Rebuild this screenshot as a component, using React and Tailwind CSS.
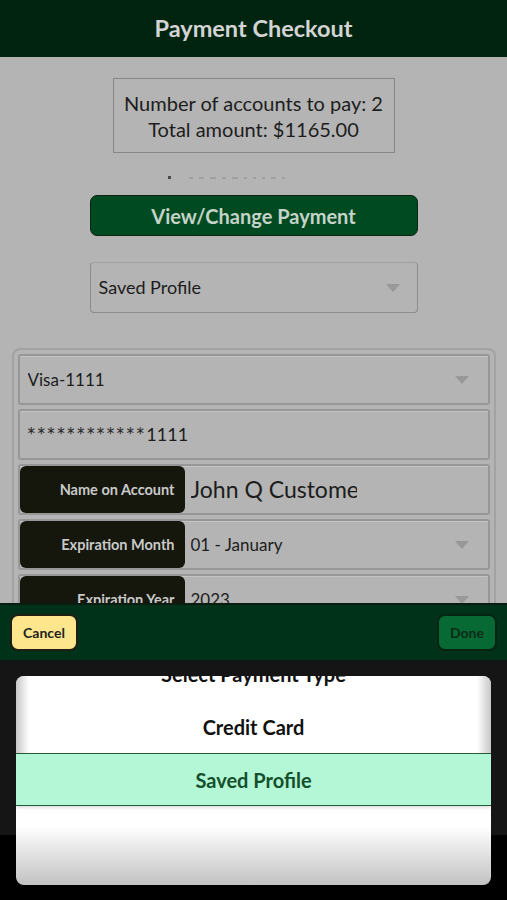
import React from "react";

function Caret() {
  return (
    <svg width="16" height="10" viewBox="0 0 16 10" className="shrink-0">
      <path d="M1 1 L15 1 L8 9 Z" fill="#989898" />
    </svg>
  );
}

function Row({ label, children, caret, valueClass = "text-[17px]" }) {
  return (
    <div className="h-[51px] shrink-0 flex items-stretch rounded-[3px] border-2 border-[#979797] shadow-[inset_0_1px_0_#c4c4c4] overflow-hidden">
      {label && (
        <div className="w-[165px] shrink-0 bg-[#15170d] rounded-[6px] flex items-center justify-end pr-[10px] text-[14.5px] font-bold text-[#c9c9c9]">
          {label}
        </div>
      )}
      <div className={`flex-1 flex items-center ${label ? "pl-[6px]" : "pl-[8px]"} pr-[18px] text-[#1c1c1c] ${valueClass}`}>
        <div className="flex-1 overflow-hidden whitespace-nowrap">{children}</div>
        {caret && <Caret />}
      </div>
    </div>
  );
}

export default function App() {
  return (
    <div
      className="w-[507px] h-[900px] flex flex-col overflow-hidden bg-black"
      style={{ fontFamily: "Lato, 'Noto Sans', sans-serif" }}
    >
      {/* Header */}
      <div className="h-[57px] shrink-0 bg-[#00240f] flex items-center justify-center">
        <h1 className="text-[23.5px] font-bold text-[#d4d4d4]">Payment Checkout</h1>
      </div>

      {/* Dimmed page content */}
      <div className="h-[546px] shrink-0 bg-[#b4b4b4] overflow-hidden flex flex-col items-center pt-[21px]">
        <div className="w-[282px] h-[75px] shrink-0 border border-[#878787] flex flex-col items-center justify-center text-[20px] leading-[26px] text-[#1d1d1d]">
          <span>Number of accounts to pay: 2</span>
          <span>Total amount: $1165.00</span>
        </div>

        {/* clipped line of text behind the summary */}
        <div className="mt-[23px] h-[3px] w-[200px] shrink-0 flex items-end gap-[6px] pl-[14px]">
          <div className="w-[3px] h-[3px] bg-[#4a4a4a]" />
          <div className="ml-[12px] w-[4px] h-[2px] bg-[#a0a0a0]" />
          <div className="w-[5px] h-[2px] bg-[#a0a0a0]" />
          <div className="w-[6px] h-[2px] bg-[#a0a0a0]" />
          <div className="w-[4px] h-[2px] bg-[#a0a0a0]" />
          <div className="w-[6px] h-[2px] bg-[#a0a0a0]" />
          <div className="w-[3px] h-[2px] bg-[#a0a0a0]" />
          <div className="w-[3px] h-[2px] bg-[#a0a0a0]" />
          <div className="w-[3px] h-[2px] bg-[#a0a0a0]" />
          <div className="w-[5px] h-[2px] bg-[#a0a0a0]" />
          <div className="w-[3px] h-[2px] bg-[#a0a0a0]" />
        </div>

        <button className="mt-[16px] w-[328px] h-[41px] shrink-0 rounded-[7px] bg-[#004a22] border border-[#0d2414] text-[20px] font-bold text-[#c5d3c8]">
          View/Change Payment
        </button>

        <div className="mt-[26px] w-[328px] h-[51px] shrink-0 rounded-[4px] border border-[#8c8c8c] border-t-[#a0a0a0] flex items-center pl-[8px] pr-[16px] text-[18px] text-[#1c1c1c]">
          <span className="flex-1">Saved Profile</span>
          <Caret />
        </div>

        <div className="mt-[35px] w-[484px] shrink-0 rounded-[8px] border-2 border-[#a2a2a2] p-[4px] flex flex-col gap-[4px]">
          <Row caret>Visa-1111</Row>
          <Row>
            <span
              className="text-[15px] tracking-[2.4px] text-[#222] relative top-[-2px]"
              style={{ fontFamily: "'DejaVu Sans', sans-serif" }}
            >
              ************
            </span>
            <span className="text-[18px]">1111</span>
          </Row>
          <Row label="Name on Account" valueClass="text-[23px]">
            <input
              readOnly
              value="John Q Customer"
              className="w-[166px] bg-transparent outline-none text-[#1c1c1c]"
            />
          </Row>
          <Row label="Expiration Month" caret>01 - January</Row>
          <Row label="Expiration Year" caret>2023</Row>
        </div>
      </div>

      {/* Picker toolbar */}
      <div className="h-[57px] shrink-0 bg-[#00321a] border-t-2 border-[#0b1d10] flex items-center justify-between px-[10px]">
        <button className="w-[68px] h-[37px] rounded-[8px] bg-[#fde68b] border-2 border-[#1f1f14] text-[14px] font-bold text-[#222]">
          Cancel
        </button>
        <button className="w-[60px] h-[37px] rounded-[8px] bg-[#076a35] border-2 border-[#062512] text-[14px] font-bold text-[#0b2a15]">
          Done
        </button>
      </div>

      {/* Picker wheel */}
      <div className="h-[240px] shrink-0 bg-[linear-gradient(to_bottom,#151515_0,#151515_175px,#000_175px)] px-[16px] pt-[16px]">
        <div className="relative h-[209px] rounded-[8px] overflow-hidden bg-[linear-gradient(to_bottom,#fff_0,#fff_150px,#c2c2c2_209px)] flex flex-col">
          <div className="absolute left-0 top-0 w-[13px] h-[80px] bg-[linear-gradient(to_right,#b9b9b9,#fff)] opacity-80" />
          <div className="absolute right-0 top-0 w-[14px] h-[80px] bg-[linear-gradient(to_left,#b9b9b9,#fff)] opacity-80" />
          <div className="mt-[-29px] h-[53px] shrink-0 flex items-center justify-center text-[20px] font-bold text-[#111]">
            Select Payment Type
          </div>
          <div className="h-[53px] shrink-0 flex items-center justify-center text-[20px] font-bold text-[#111]">
            Credit Card
          </div>
          <div className="relative z-10 h-[53px] shrink-0 flex items-center justify-center bg-[#b4f7d6] border-y border-[#245c3a] text-[20px] font-bold text-[#14502c] shadow-[0_2px_3px_rgba(0,0,0,0.12)]">
            Saved Profile
          </div>
        </div>
      </div>
    </div>
  );
}
